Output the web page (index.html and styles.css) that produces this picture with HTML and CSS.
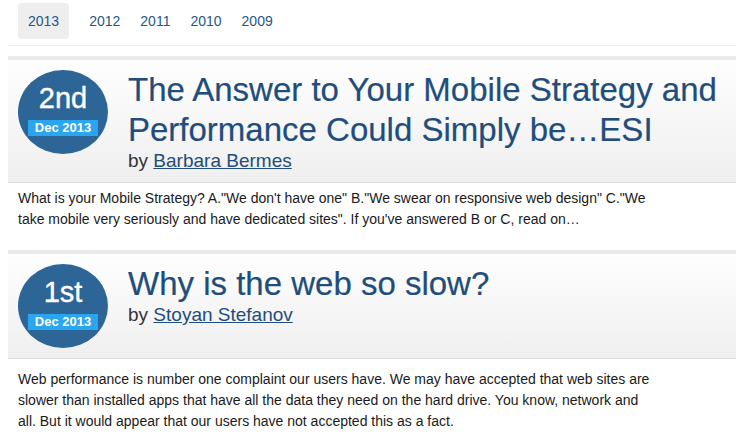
FILE: index.html
```html
<!DOCTYPE html>
<html>
<head>
<meta charset="utf-8">
<link rel="stylesheet" href="styles.css">
</head>
<body>
<div class="page">
  <nav class="years">
    <ul class="years-list">
      <li class="year year-active"><a href="#">2013</a></li>
      <li class="year"><a href="#">2012</a></li>
      <li class="year"><a href="#">2011</a></li>
      <li class="year"><a href="#">2010</a></li>
      <li class="year"><a href="#">2009</a></li>
    </ul>
  </nav>

  <article class="post post-first">
    <header class="post-head">
      <div class="date-badge">
        <span class="day">2nd</span>
        <span class="month">Dec 2013</span>
      </div>
      <div class="post-titles">
        <h2 class="post-title">The Answer to Your Mobile Strategy and Performance Could Simply be…ESI</h2>
        <p class="byline">by <a href="#">Barbara Bermes</a></p>
      </div>
    </header>
    <p class="excerpt">What is your Mobile Strategy? A."We don't have one" B."We swear on responsive web design" C."We take mobile very seriously and have dedicated sites". If you've answered B or C, read on…</p>
  </article>

  <article class="post">
    <header class="post-head">
      <div class="date-badge">
        <span class="day">1st</span>
        <span class="month">Dec 2013</span>
      </div>
      <div class="post-titles">
        <h2 class="post-title">Why is the web so slow?</h2>
        <p class="byline">by <a href="#">Stoyan Stefanov</a></p>
      </div>
    </header>
    <p class="excerpt">Web performance is number one complaint our users have. We may have accepted that web sites are slower than installed apps that have all the data they need on the hard drive. You know, network and all. But it would appear that our users have not accepted this as a fact.</p>
  </article>
</div>
</body>
</html>
```

FILE: styles.css
```css
html, body {
  margin: 0;
  padding: 0;
  background: #fff;
}

body {
  font-family: "Liberation Sans", Arial, Helvetica, sans-serif;
  color: #222;
  overflow: hidden;
}

.page {
  padding-left: 8px;
}

.years {
  border-bottom: 1px solid #eee;
  padding: 3px 0 6px 10px;
}

.years-list {
  list-style: none;
  margin: 0;
  padding: 0;
  display: flex;
}

.year a {
  display: block;
  padding: 8px 10px;
  font-size: 14px;
  line-height: 20px;
  color: #24578a;
  text-decoration: none;
  border-radius: 4px;
}

.year-active {
  margin-right: 10px;
}

.year-active a {
  background: #eee;
}

.post {
  margin-top: 10px;
}

.post-head {
  display: flex;
  align-items: flex-start;
  gap: 20px;
  padding: 10px;
  border-top: 4px solid #ebebeb;
  border-bottom: 1px solid #dcdcdc;
  background: linear-gradient(#fefefe, #efefef);
}

.date-badge {
  flex: none;
  width: 90px;
  height: 84px;
  border-radius: 50%;
  background: #2d6597;
  color: #fff;
  display: flex;
  flex-direction: column;
  align-items: center;
  box-sizing: border-box;
  padding-top: 12px;
}

.day {
  font-size: 29px;
  line-height: 32px;
  -webkit-text-stroke: 0.4px #fff;
}

.month {
  margin-top: 6px;
  width: 70px;
  height: 16px;
  background: #2aa5ef;
  font-size: 13px;
  font-weight: bold;
  line-height: 16px;
  text-align: center;
}

.post-titles {
  flex: 1;
}

.post-title {
  margin: 0;
  font-size: 33px;
  font-weight: normal;
  line-height: 40px;
  color: #1f4d7c;
  -webkit-text-stroke: 0.2px #1f4d7c;
}

.byline {
  margin: 0;
  font-size: 19px;
  line-height: 22px;
  color: #333;
}

.byline a {
  color: #1f4d7c;
}

.excerpt {
  margin: 0;
  padding: 10px 10px 10px;
  max-width: 640px;
  font-size: 14px;
  line-height: 21px;
  color: #1a1a1a;
}

.post-first .excerpt {
  padding-top: 5px;
}
```
